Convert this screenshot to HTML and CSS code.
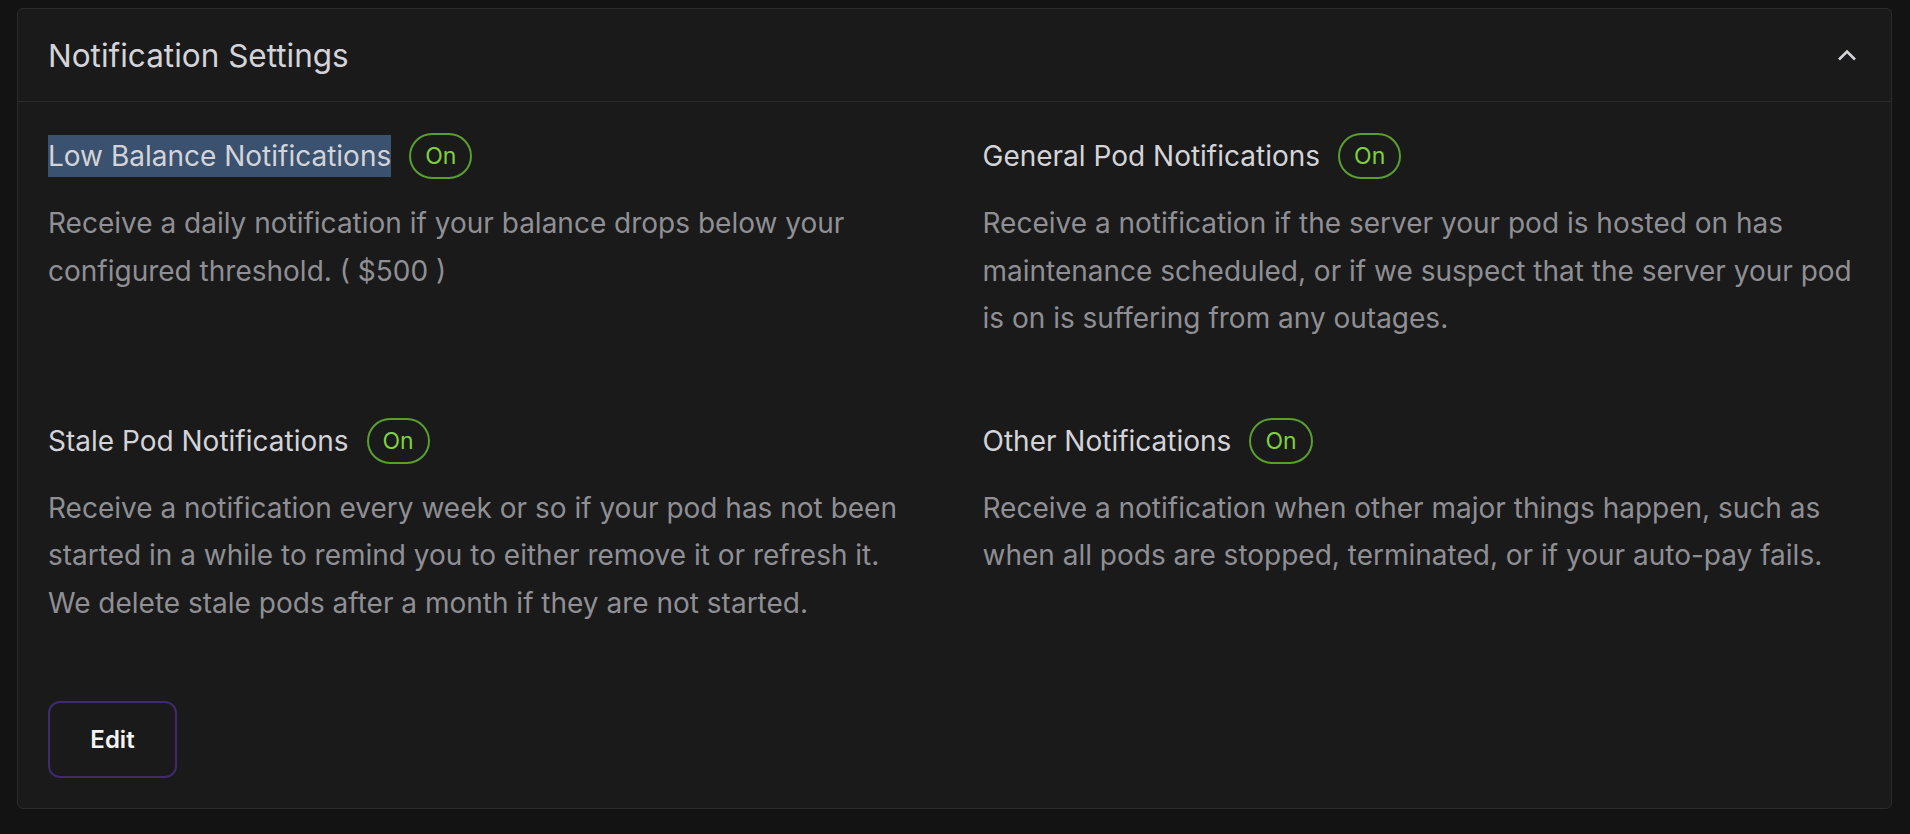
FILE: index.html
```html
<!DOCTYPE html>
<html lang="en">
  <head>
    <meta charset="UTF-8" />
    <title>Notification Settings</title>
    <link rel="stylesheet" href="styles.css">
  </head>
  <body>
    <section class="card">
      <header class="card-header">
        <h2>Notification Settings</h2>
        <svg class="chevron" width="20" height="12" viewBox="0 0 20 12">
          <polyline points="2,10.5 10,2.5 18,10.5" fill="none" stroke="#d4d4d8" stroke-width="2.6" />
        </svg>
      </header>

      <div class="card-body">
        <div class="settings">
          <div class="setting">
            <div class="setting-title">
              <span class="label selected">Low Balance Notifications</span>
              <span class="badge">On</span>
            </div>
            <p>Receive a daily notification if your balance drops below your configured threshold. ( $500 )</p>
          </div>

          <div class="setting">
            <div class="setting-title">
              <span class="label">General Pod Notifications</span>
              <span class="badge">On</span>
            </div>
            <p>Receive a notification if the server your pod is hosted on has maintenance scheduled, or if we suspect that the server your pod is on is suffering from any outages.</p>
          </div>

          <div class="setting">
            <div class="setting-title">
              <span class="label">Stale Pod Notifications</span>
              <span class="badge">On</span>
            </div>
            <p>Receive a notification every week or so if your pod has not been started in a while to remind you to either remove it or refresh it. We delete stale pods after a month if they are not started.</p>
          </div>

          <div class="setting">
            <div class="setting-title">
              <span class="label">Other Notifications</span>
              <span class="badge">On</span>
            </div>
            <p>Receive a notification when other major things happen, such as when all pods are stopped, terminated, or if your auto-pay fails.</p>
          </div>
        </div>

        <button type="button" class="edit-btn">Edit</button>
      </div>
    </section>
  </body>
</html>
```

FILE: styles.css
```css
html,
body {
  margin: 0;
  height: 100%;
}

body {
  font-family: Inter, "Noto Sans", sans-serif;
  background: #131313;
  padding: 8px 18px 0 17px;
  box-sizing: border-box;
}

.card {
  background: #1a1a1a;
  border: 1px solid #2b2b2b;
  border-radius: 6px;
  height: 801px;
  box-sizing: border-box;
}

.card-header {
  height: 92px;
  display: flex;
  align-items: center;
  justify-content: space-between;
  padding: 0 34px 0 30px;
  border-bottom: 1px solid #2b2b2b;
}

.card-header h2 {
  margin: 0;
  font-size: 31.5px;
  font-weight: 400;
  color: #d4d4d8;
}

.chevron {
  display: block;
}

.card-body {
  padding: 31px 30px 30px;
}

.settings {
  display: grid;
  grid-template-columns: 1fr 1fr;
  column-gap: 56px;
  row-gap: 75px;
}

.setting-title {
  display: flex;
  align-items: center;
  gap: 18px;
  height: 46px;
}

.label {
  font-size: 28px;
  line-height: 42px;
  color: #d4d4d8;
}

.selected {
  background: #3b5170;
}

.badge {
  box-sizing: border-box;
  height: 46px;
  padding: 0 14px;
  display: flex;
  align-items: center;
  border: 2px solid #5a9e2f;
  border-radius: 23px;
  color: #7fd13b;
  font-size: 23px;
}

.setting p {
  margin: 21px 0 0;
  font-size: 28px;
  line-height: 47.5px;
  color: #8f8f94;
}

.edit-btn {
  display: block;
  margin-top: 74px;
  width: 129px;
  height: 77px;
  background: transparent;
  border: 2px solid #3f2a6e;
  border-radius: 12px;
  color: #f4f4f5;
  font-family: Inter, "Noto Sans", sans-serif;
  font-size: 24px;
  font-weight: 600;
  cursor: pointer;
}
```
